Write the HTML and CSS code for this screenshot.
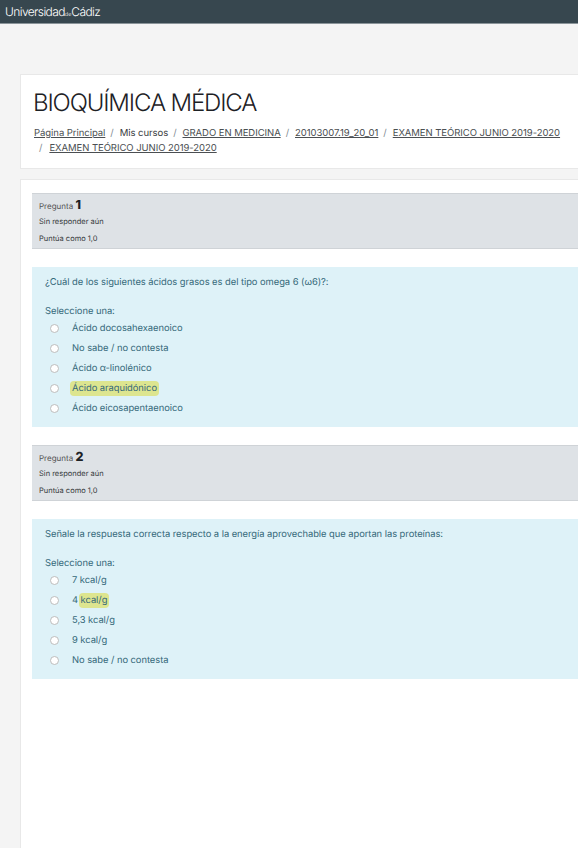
FILE: index.html
```html
<!DOCTYPE html>
<html lang="es">
<head>
    <meta charset="UTF-8">
    <title>BIOQUÍMICA MÉDICA</title>
    <link rel="stylesheet" href="styles.css">
</head>
<body>
    <div class="navbar">
        <div class="brand">Universidad<span class="brand-de">de</span>Cádiz</div>
    </div>
    <div class="page">
        <div class="card page-header">
            <h1>BIOQUÍMICA MÉDICA</h1>
            <div class="breadcrumb">
                <a href="#">Página Principal</a><span class="sep">/</span>
                <span class="crumb">Mis cursos</span><span class="sep">/</span>
                <a href="#">GRADO EN MEDICINA</a><span class="sep">/</span>
                <a href="#">20103007.19_20_01</a><span class="sep">/</span>
                <a href="#">EXAMEN TEÓRICO JUNIO 2019-2020</a>
                <span class="break"></span>
                <span class="sep first">/</span>
                <a href="#">EXAMEN TEÓRICO JUNIO 2019-2020</a>
            </div>
        </div>
        <div class="card main">
            <div class="question">
                <div class="info">
                    <div class="qno">Pregunta <b>1</b></div>
                    <div class="state">Sin responder aún</div>
                    <div class="grade">Puntúa como 1,0</div>
                </div>
                <div class="content">
                    <p class="qtext">¿Cuál de los siguientes ácidos grasos es del tipo omega 6 (ω6)?:</p>
                    <div class="prompt">Seleccione una:</div>
                    <div class="answer"><span class="radio"></span><span>Ácido docosahexaenoico</span></div>
                    <div class="answer"><span class="radio"></span><span>No sabe / no contesta</span></div>
                    <div class="answer"><span class="radio"></span><span>Ácido α-linolénico</span></div>
                    <div class="answer"><span class="radio"></span><span><mark>Ácido araquidónico</mark></span></div>
                    <div class="answer"><span class="radio"></span><span>Ácido eicosapentaenoico</span></div>
                </div>
            </div>
            <div class="question">
                <div class="info">
                    <div class="qno">Pregunta <b>2</b></div>
                    <div class="state">Sin responder aún</div>
                    <div class="grade">Puntúa como 1,0</div>
                </div>
                <div class="content">
                    <p class="qtext">Señale la respuesta correcta respecto a la energía aprovechable que aportan las proteínas:</p>
                    <div class="prompt">Seleccione una:</div>
                    <div class="answer"><span class="radio"></span><span>7 kcal/g</span></div>
                    <div class="answer"><span class="radio"></span><span>4 <mark>kcal/g</mark></span></div>
                    <div class="answer"><span class="radio"></span><span>5,3 kcal/g</span></div>
                    <div class="answer"><span class="radio"></span><span>9 kcal/g</span></div>
                    <div class="answer"><span class="radio"></span><span>No sabe / no contesta</span></div>
                </div>
            </div>
        </div>
    </div>
</body>
</html>
```

FILE: styles.css
```css
html, body {
    height: 100%;
}
body {
    font-family: Inter, 'Noto Sans', sans-serif;
    background: #f4f4f4;
    margin: 0;
    padding: 0;
    color: #373a3c;
    overflow: hidden;
    text-rendering: geometricPrecision;
}
.navbar {
    height: 23px;
    background: #37474f;
    border-bottom: 1px solid #8a9499;
    display: flex;
    align-items: center;
    padding: 0 5px;
}
.brand {
    color: #fff;
    font-size: 12px;
    font-weight: 300;
    letter-spacing: -0.6px;
}
.brand-de {
    font-size: 5.5px;
    letter-spacing: 0;
}
.page {
    width: 558px;
    height: 774px;
    overflow: hidden;
    padding: 50px 0 0 20px;
    display: flex;
    flex-direction: column;
    gap: 10px;
}
.card {
    background: #fff;
    border: 1px solid #e8e8e8;
    border-right: 0;
}
.page-header {
    height: 95px;
    flex: none;
    box-sizing: border-box;
    padding: 13px 13px 0;
}
.page-header h1 {
    font-size: 24px;
    font-weight: 300;
    letter-spacing: -1.15px;
    line-height: 30px;
    margin: 0 0 8px -1px;
    color: #1d2125;
}
.breadcrumb {
    font-size: 9.5px;
    letter-spacing: -0.05px;
    line-height: 14.5px;
    padding-top: 1px;
    display: flex;
    flex-wrap: wrap;
    color: #373a3c;
}
.breadcrumb a {
    color: #4b4f52;
}
.sep {
    color: #818a91;
    margin: 0 6px 0 5px;
}
.sep.first {
    margin-right: 7px;
}
.break {
    flex-basis: 100%;
}
.main {
    flex: none;
    height: 800px;
    padding: 13px 0 0 11px;
}
.question {
    margin-bottom: 18px;
}
.info {
    height: 56px;
    box-sizing: border-box;
    background: #dee2e6;
    border-top: 1px solid #cfd3d7;
    border-bottom: 1px solid #cfd3d7;
    padding: 2px 7px 0;
    font-size: 7.5px;
    color: #373a3c;
    margin-bottom: 18px;
}
.qno {
    height: 17px;
    line-height: 19px;
    font-size: 8px;
    color: #555;
}
.qno b {
    font-size: 12.5px;
    font-weight: 800;
    color: #1d2125;
}
.state {
    line-height: 17px;
}
.grade {
    line-height: 17px;
}
.content {
    background: #def2f8;
    color: #35697a;
    height: 160px;
    box-sizing: border-box;
    padding: 8px 13px 0;
    font-size: 9.4px;
    letter-spacing: -0.05px;
}
.qtext {
    margin: 0;
    line-height: 15px;
    height: 29px;
}
.prompt {
    line-height: 15px;
}
.answer {
    display: flex;
    align-items: center;
    height: 19.9px;
}
.radio {
    width: 7px;
    height: 7px;
    margin: 0 13px 0 5px;
    border: 1px solid #bdbdbd;
    border-radius: 50%;
    background: #fff;
    flex: none;
}
mark {
    background: #dde58f;
    color: #35697a;
    border-radius: 4px;
    padding: 2px 2px;
    margin: 0 -2px;
}
```
